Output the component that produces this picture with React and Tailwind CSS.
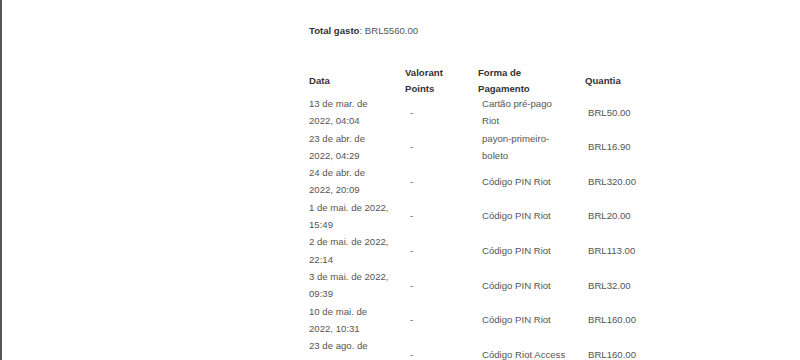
import React from 'react';

const rows = [
  { date: '13 de mar. de 2022, 04:04', vp: '-', pay: 'Cartão pré-pago Riot', amount: 'BRL50.00' },
  { date: '23 de abr. de 2022, 04:29', vp: '-', pay: 'payon-primeiro-boleto', amount: 'BRL16.90' },
  { date: '24 de abr. de 2022, 20:09', vp: '-', pay: 'Código PIN Riot', amount: 'BRL320.00' },
  { date: '1 de mai. de 2022, 15:49', vp: '-', pay: 'Código PIN Riot', amount: 'BRL20.00' },
  { date: '2 de mai. de 2022, 22:14', vp: '-', pay: 'Código PIN Riot', amount: 'BRL113.00' },
  { date: '3 de mai. de 2022, 09:39', vp: '-', pay: 'Código PIN Riot', amount: 'BRL32.00' },
  { date: '10 de mai. de 2022, 10:31', vp: '-', pay: 'Código PIN Riot', amount: 'BRL160.00' },
  { date: '23 de ago. de 2022, 23:08', vp: '-', pay: 'Código Riot Access', amount: 'BRL160.00' },
];

const App = () => {
  return (
    <div
      className="min-h-screen w-full bg-white border-l-2 border-[#555555] overflow-hidden text-[9.6px]"
      style={{ fontFamily: '"Liberation Sans", Arial, sans-serif' }}
    >
      <div className="pl-[307px] pt-[22px] h-[360px] overflow-hidden">
        {/* Total */}
        <p className="leading-[17px] text-[#555555]">
          <span className="font-bold text-[#333333]">Total gasto</span>: BRL5560.00
        </p>

        {/* Table */}
        <div className="mt-[26px] w-[360px]">
          <div className="grid grid-cols-[96px_73px_107px_1fr] items-center h-[30px] leading-[15.5px] font-bold text-[#333333]">
            <div>Data</div>
            <div className="pr-[14px]">Valorant Points</div>
            <div className="pr-[24px]">Forma de Pagamento</div>
            <div>Quantia</div>
          </div>

          {rows.map((row, i) => (
            <div
              key={i}
              className="grid grid-cols-[96px_73px_107px_1fr] items-center leading-[17.3px] text-[#555555]"
            >
              <div className="pr-[15px]">{row.date}</div>
              <div className="pl-[5px]">{row.vp}</div>
              <div className="pl-[4px] pr-[16px]">{row.pay}</div>
              <div className="pl-[3px]">{row.amount}</div>
            </div>
          ))}
        </div>
      </div>
    </div>
  );
};

export default App;
